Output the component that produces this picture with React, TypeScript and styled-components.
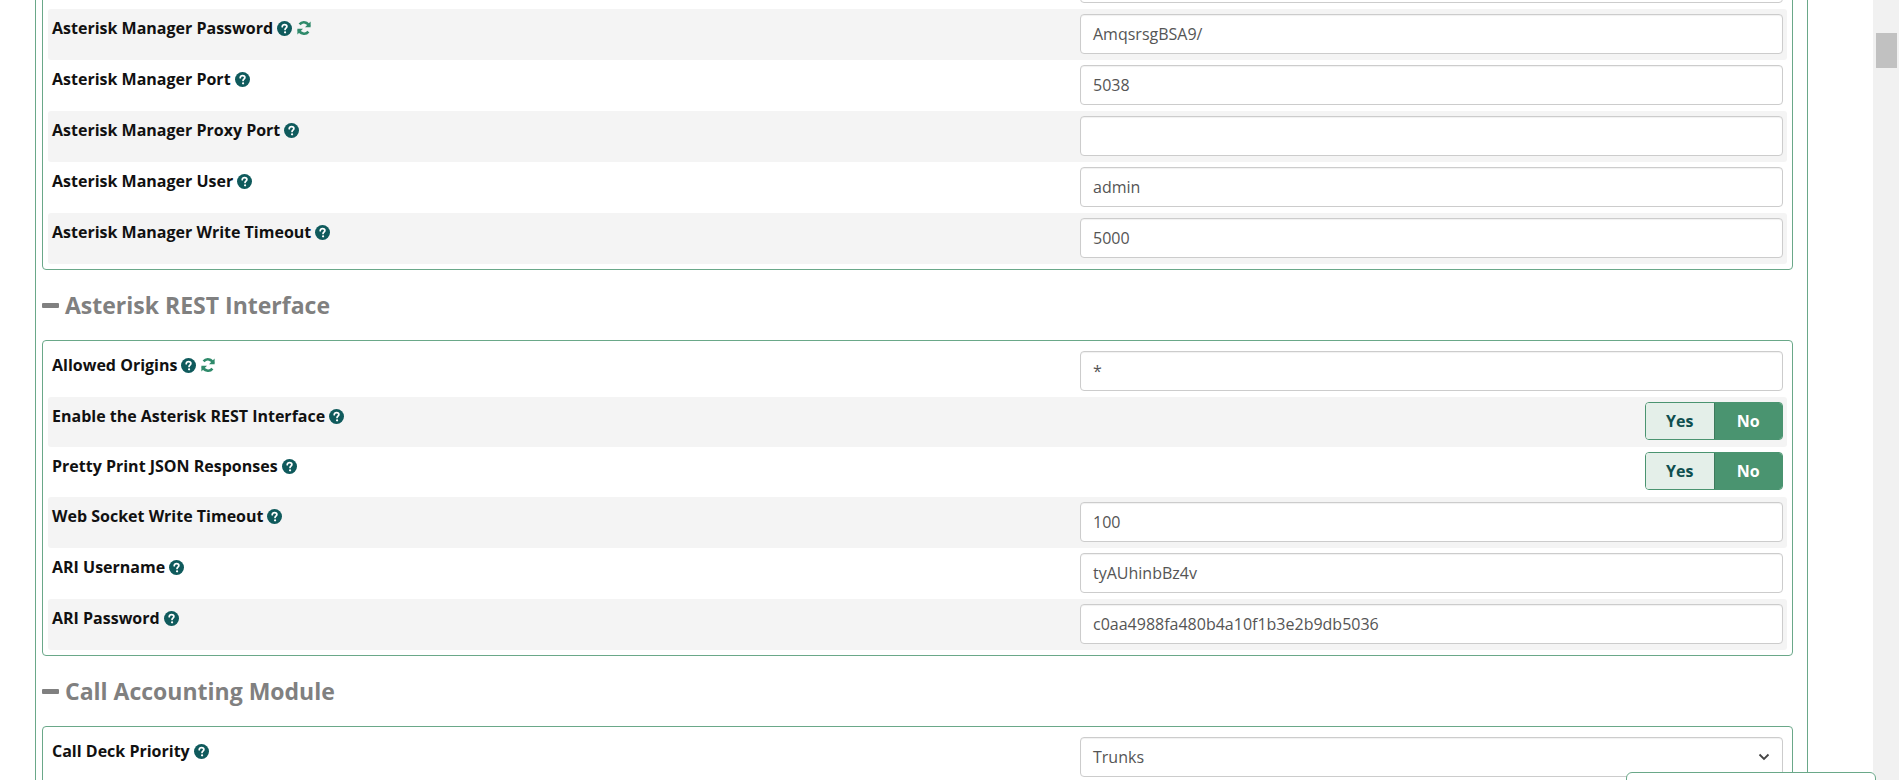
import React from "react";
import styled, { createGlobalStyle } from "styled-components";

const GlobalStyles = createGlobalStyle`
  html, body {
    margin: 0;
    padding: 0;
    height: 100%;
    overflow: hidden;
    background: #fff;
    font-family: "Open Sans", "Noto Sans", sans-serif;
  }
`;

const Page = styled.div`
  display: flex;
  height: 780px;
  overflow: hidden;
`;

const Main = styled.div`
  flex: 1;
  padding-left: 35px;
  padding-right: 65px;
`;

const Column = styled.div`
  border-left: 1px solid #6aa889;
  border-right: 1px solid #6aa889;
  padding: 0 14px 0 6px;
  margin-top: -48px;
`;

const ScrollTrack = styled.div`
  width: 26px;
  background: #f1f1f1;
  padding-top: 33px;
  display: flex;
  justify-content: center;
`;

const ScrollThumb = styled.div`
  width: 21px;
  height: 35px;
  background: #c1c1c1;
`;

const Panel = styled.div`
  border: 1px solid #6aa889;
  border-radius: 4px;
  padding: 5px;
`;

const Row = styled.div<{ $alt?: boolean; $short?: boolean }>`
  display: flex;
  align-items: flex-start;
  justify-content: space-between;
  padding: 5px 4px 6px;
  height: ${(p) => (p.$short ? "39px" : "40px")};
  background: ${(p) => (p.$alt ? "#f4f4f4" : "#fff")};
  border-radius: 3px;
`;

const Label = styled.div`
  font-weight: 700;
  font-size: 16px;
  color: #111;
  padding-top: 3px;
  display: flex;
  align-items: center;
  gap: 4px;
`;

const Icon = styled.span<{ $tone?: string }>`
  display: inline-flex;
  color: ${(p) => p.$tone || "#0f5a5c"};
`;

const Input = styled.div`
  width: 703px;
  height: 40px;
  box-sizing: border-box;
  border: 1px solid #ccc;
  border-radius: 4px;
  background: #fff;
  box-shadow: inset 0 1px 1px rgba(0, 0, 0, 0.06);
  padding: 0 12px;
  display: flex;
  align-items: center;
  justify-content: space-between;
  font-size: 16px;
  color: #555;
`;

const Toggle = styled.div`
  display: flex;
  width: 138px;
  height: 38px;
  box-sizing: border-box;
  border: 1px solid #4a9470;
  border-radius: 4px;
  overflow: hidden;
`;

const ToggleOption = styled.div<{ $on?: boolean }>`
  flex: 1;
  display: flex;
  align-items: center;
  justify-content: center;
  font-weight: 700;
  font-size: 16px;
  background: ${(p) => (p.$on ? "#4a9470" : "#e4efe9")};
  color: ${(p) => (p.$on ? "#fff" : "#0f4f4f")};
  border-left: ${(p) => (p.$on ? "1px solid #3c7a5c" : "none")};
`;

const SectionTitle = styled.h2`
  margin: 0;
  height: 70px;
  display: flex;
  align-items: center;
  gap: 6px;
  font-size: 23px;
  font-weight: 700;
  color: #808080;
`;

const Dash = styled.span`
  display: inline-block;
  width: 17px;
  height: 5px;
  background: #808080;
  border-radius: 1px;
`;

const FloatBar = styled.div`
  position: fixed;
  left: 1626px;
  top: 772px;
  width: 248px;
  height: 30px;
  border: 1px solid #6aa889;
  border-radius: 6px 6px 0 0;
  background: #fff;
`;

const Help = () => (
  <Icon>
    <svg width="15" height="15" viewBox="0 0 16 16">
      <circle cx="8" cy="8" r="8" fill="currentColor" />
      <path
        d="M5.6 6.1c0-1.4 1.1-2.3 2.5-2.3s2.4.9 2.4 2.1c0 1.6-1.9 1.7-1.9 3.1"
        fill="none"
        stroke="#fff"
        strokeWidth="1.9"
        strokeLinecap="round"
      />
      <circle cx="8.6" cy="12.1" r="1.2" fill="#fff" />
    </svg>
  </Icon>
);

const Refresh = () => (
  <Icon $tone="#2f8a6a">
    <svg width="16" height="16" viewBox="0 0 16 16" fill="none" stroke="currentColor" strokeWidth="2.6">
      <path d="M13.2 6.4A5.5 5.5 0 0 0 3.6 4.4" />
      <path d="M2.8 9.6a5.5 5.5 0 0 0 9.6 2" />
      <path d="M14.6 1.6v5.6H9z" fill="currentColor" stroke="none" />
      <path d="M1.4 14.4V8.8H7z" fill="currentColor" stroke="none" />
    </svg>
  </Icon>
);

const Chevron = () => (
  <svg width="12" height="8" viewBox="0 0 12 8">
    <path d="M1.5 1.5 6 6l4.5-4.5" fill="none" stroke="#444" strokeWidth="1.8" />
  </svg>
);

type Field = {
  label: string;
  value?: string;
  toggle?: boolean;
  refresh?: boolean;
  select?: boolean;
};

const FieldRow: React.FC<{ field: Field; alt: boolean }> = ({ field, alt }) => (
  <Row $alt={alt} $short={field.toggle}>
    <Label>
      {field.label}
      {field.label && <Help />}
      {field.refresh && <Refresh />}
    </Label>
    {field.toggle ? (
      <Toggle>
        <ToggleOption>Yes</ToggleOption>
        <ToggleOption $on>No</ToggleOption>
      </Toggle>
    ) : (
      <Input>
        <span>{field.value}</span>
        {field.select && <Chevron />}
      </Input>
    )}
  </Row>
);

const managerFields: Field[] = [
  { label: "", value: "" },
  { label: "Asterisk Manager Password", value: "AmqsrsgBSA9/", refresh: true },
  { label: "Asterisk Manager Port", value: "5038" },
  { label: "Asterisk Manager Proxy Port", value: "" },
  { label: "Asterisk Manager User", value: "admin" },
  { label: "Asterisk Manager Write Timeout", value: "5000" },
];

const restFields: Field[] = [
  { label: "Allowed Origins", value: "*", refresh: true },
  { label: "Enable the Asterisk REST Interface", toggle: true },
  { label: "Pretty Print JSON Responses", toggle: true },
  { label: "Web Socket Write Timeout", value: "100" },
  { label: "ARI Username", value: "tyAUhinbBz4v" },
  { label: "ARI Password", value: "c0aa4988fa480b4a10f1b3e2b9db5036" },
];

const App: React.FC = () => (
  <>
    <GlobalStyles />
    <Page>
      <Main>
        <Column>
          <Panel>
            {managerFields.map((f, i) => (
              <FieldRow key={i} field={f} alt={i % 2 === 1} />
            ))}
          </Panel>
          <SectionTitle>
            <Dash />
            Asterisk REST Interface
          </SectionTitle>
          <Panel>
            {restFields.map((f, i) => (
              <FieldRow key={f.label} field={f} alt={i % 2 === 1} />
            ))}
          </Panel>
          <SectionTitle>
            <Dash />
            Call Accounting Module
          </SectionTitle>
          <Panel>
            <FieldRow field={{ label: "Call Deck Priority", value: "Trunks", select: true }} alt={false} />
          </Panel>
        </Column>
      </Main>
      <ScrollTrack>
        <ScrollThumb />
      </ScrollTrack>
      <FloatBar />
    </Page>
  </>
);

export default App;
